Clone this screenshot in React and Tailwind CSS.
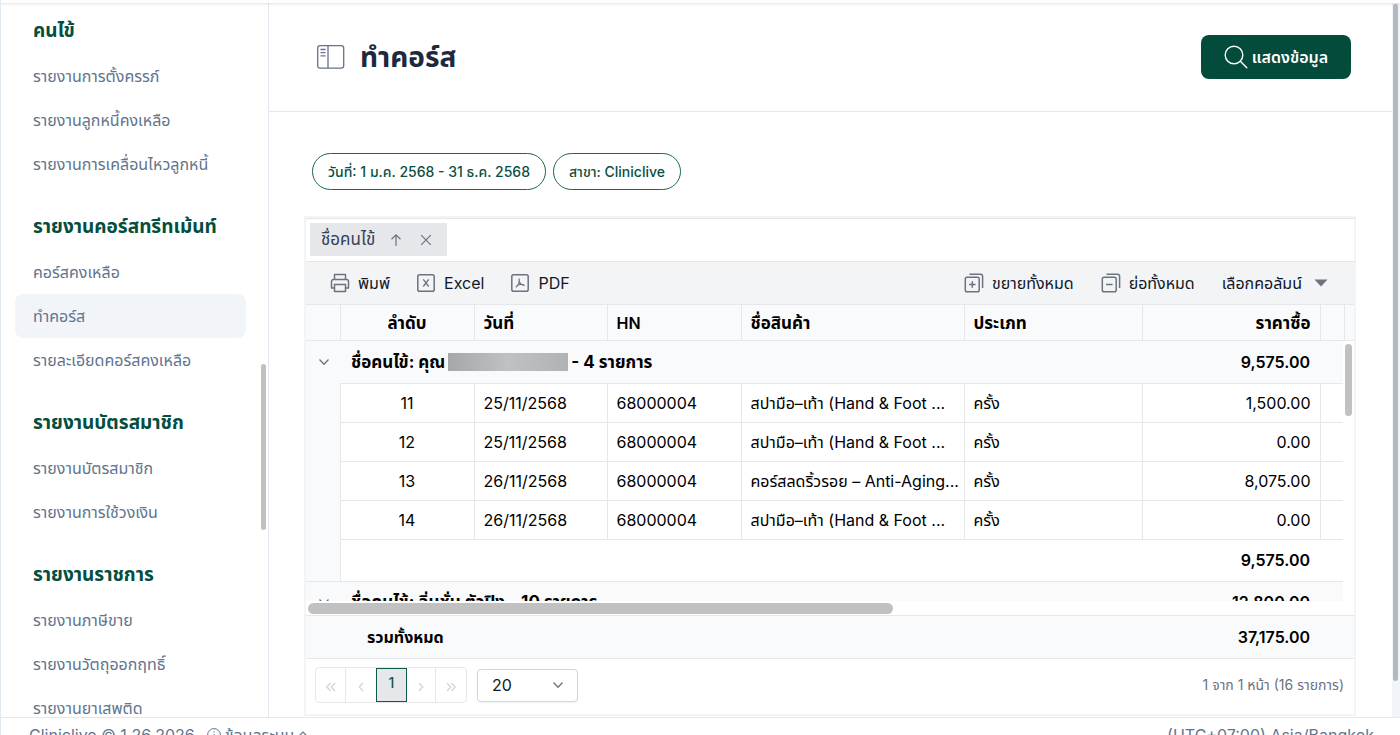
import React, { useState } from 'react';

const menuSections = [
  {
    title: 'คนไข้',
    items: ['รายงานการตั้งครรภ์', 'รายงานลูกหนี้คงเหลือ', 'รายงานการเคลื่อนไหวลูกหนี้']
  },
  {
    title: 'รายงานคอร์สทรีทเม้นท์',
    items: ['คอร์สคงเหลือ', 'ทำคอร์ส', 'รายละเอียดคอร์สคงเหลือ']
  },
  {
    title: 'รายงานบัตรสมาชิก',
    items: ['รายงานบัตรสมาชิก', 'รายงานการใช้วงเงิน']
  },
  {
    title: 'รายงานราชการ',
    items: ['รายงานภาษีขาย', 'รายงานวัตถุออกฤทธิ์', 'รายงานยาเสพติด']
  }
];

const rows = [
  { no: 11, date: '25/11/2568', hn: '68000004', name: 'สปามือ–เท้า (Hand & Foot ...', type: 'ครั้ง', price: '1,500.00' },
  { no: 12, date: '25/11/2568', hn: '68000004', name: 'สปามือ–เท้า (Hand & Foot ...', type: 'ครั้ง', price: '0.00' },
  { no: 13, date: '26/11/2568', hn: '68000004', name: 'คอร์สลดริ้วรอย – Anti-Aging...', type: 'ครั้ง', price: '8,075.00' },
  { no: 14, date: '26/11/2568', hn: '68000004', name: 'สปามือ–เท้า (Hand & Foot ...', type: 'ครั้ง', price: '0.00' }
];

const PanelIcon = () => (
  <svg width="28" height="24" viewBox="0 0 28 24" fill="none" stroke="#64748b" strokeWidth="1.3">
    <rect x="0.7" y="0.7" width="26" height="22.4" rx="2.4" />
    <path d="M11 0.7V23.1M3.5 4.5H8.5M3.5 7.7H8.5M3.5 10.9H8.5" />
  </svg>
);

const SearchIcon = () => (
  <svg width="24" height="24" viewBox="0 0 24 24" fill="none" stroke="white" strokeWidth="1.4" strokeLinecap="round">
    <circle cx="10" cy="10" r="8.8" />
    <path d="M16.3 16.3L22.8 22.8" />
  </svg>
);

const PrintIcon = () => (
  <svg width="20" height="20" viewBox="0 0 20 20" fill="none" stroke="#6b7280" strokeWidth="1.5" strokeLinejoin="round">
    <path d="M4.5 6.5V1.5H15.5V6.5" />
    <path d="M4.5 15H1.5V8.5C1.5 7.4 2.4 6.5 3.5 6.5H16.5C17.6 6.5 18.5 7.4 18.5 8.5V15H15.5" />
    <rect x="4.5" y="11.5" width="11" height="7" />
  </svg>
);

const ExcelIcon = () => (
  <svg width="18" height="18" viewBox="0 0 18 18" fill="none" stroke="#6b7280" strokeWidth="1.5">
    <rect x="0.8" y="0.8" width="16.4" height="16.4" rx="1.8" />
    <path d="M6.3 5.3L11.7 12.5M11.7 5.3L6.3 12.5" strokeWidth="1.3" />
  </svg>
);

const PdfIcon = () => (
  <svg width="18" height="18" viewBox="0 0 18 18" fill="none" stroke="#6b7280" strokeWidth="1.5">
    <rect x="0.8" y="0.8" width="16.4" height="16.4" rx="1.8" />
    <path d="M8 4.5C8.8 8 7 11.5 4.8 13.2M8.3 7.5C9 9.5 11 11.2 13.6 11.4M5.8 11.6C7.5 10.5 10 10 12.6 10.6" strokeWidth="1.2" />
  </svg>
);

const StackIcon = ({ plus }) => (
  <svg width="20" height="20" viewBox="0 0 20 20" fill="none" stroke="#6b7280" strokeWidth="1.5">
    <rect x="1.3" y="4.3" width="13.9" height="14.4" rx="1.8" />
    <path d="M5.5 1.3H16.5C17.8 1.3 18.6 2.1 18.6 3.4V15" />
    <path d="M5 11.5H11.6" />
    {plus && <path d="M8.3 8.2V14.8" />}
  </svg>
);

const ArrowUpIcon = () => (
  <svg width="12" height="12" viewBox="0 0 12 12" fill="none" stroke="#6b7280" strokeWidth="1.2">
    <path d="M6 12V1M1.5 5.3L6 0.9L10.5 5.3" />
  </svg>
);

const CloseIcon = () => (
  <svg width="12" height="12" viewBox="0 0 12 12" fill="none" stroke="#6b7280" strokeWidth="1.2">
    <path d="M1.2 1.2L10.8 10.8M10.8 1.2L1.2 10.8" />
  </svg>
);

const ChevronDownIcon = () => (
  <svg width="12" height="12" viewBox="0 0 12 12" fill="none" stroke="#6b7280" strokeWidth="1.3">
    <path d="M1.5 3.5L6 8.2L10.5 3.5" />
  </svg>
);

const PagerIcon = ({ d }) => (
  <svg width="12" height="12" viewBox="0 0 12 12" fill="none" stroke="#d1d5db" strokeWidth="1.3">
    <path d={d} />
  </svg>
);

const Columns = () => (
  <colgroup>
    <col className="w-[34px]" />
    <col className="w-[134px]" />
    <col className="w-[133px]" />
    <col className="w-[134px]" />
    <col className="w-[223px]" />
    <col className="w-[178px]" />
    <col className="w-[178px]" />
    <col />
  </colgroup>
);

const Sidebar = () => (
  <aside className="relative w-[268px] shrink-0 overflow-hidden border-r border-slate-200">
    <nav className="pt-[5px] pr-[22px] pl-[14px]">
      {menuSections.map((section) => (
        <div key={section.title} className="mb-[18px]">
          <h2 className="flex h-[46px] items-center px-[18px] text-[19px] font-bold whitespace-nowrap text-[#044e3f]">{section.title}</h2>
          {section.items.map((item) => (
            <a
              key={item}
              href="#"
              className={`flex h-11 items-center rounded-lg px-[18px] text-base whitespace-nowrap text-slate-500 ${item === 'ทำคอร์ส' ? 'bg-slate-100' : ''}`}
            >
              {item}
            </a>
          ))}
        </div>
      ))}
    </nav>
    <div className="absolute top-[361px] right-[2px] h-[166px] w-[5px] rounded-full bg-[#c1c1c1]" />
  </aside>
);

const Toolbar = () => (
  <div className="flex h-[43px] items-center justify-between border-t border-gray-200 bg-gray-100 pr-[26px] pl-6 text-gray-900">
    <div className="flex items-center gap-[27px]">
      <button className="flex items-center gap-2">
        <PrintIcon />
        พิมพ์
      </button>
      <button className="flex items-center gap-[9px]">
        <ExcelIcon />
        Excel
      </button>
      <button className="flex items-center gap-[9px]">
        <PdfIcon />
        PDF
      </button>
    </div>
    <div className="flex items-center gap-[27px]">
      <button className="flex items-center gap-2">
        <StackIcon plus />
        ขยายทั้งหมด
      </button>
      <button className="flex items-center gap-2">
        <StackIcon />
        ย่อทั้งหมด
      </button>
      <button className="flex items-center gap-3">
        เลือกคอลัมน์
        <svg width="14" height="8" viewBox="0 0 14 8" fill="#6b7280">
          <path d="M0.5 0.5H13.5L7 7.5Z" />
        </svg>
      </button>
    </div>
  </div>
);

const CourseGrid = () => {
  const [pageSize, setPageSize] = useState('20');

  return (
    <div className="mt-[26px] mr-9 ml-[35px] border-2 border-gray-100 text-base text-black">
      {/* Group drop area */}
      <div className="border-t border-gray-200 px-1 pt-1 pb-[5px]">
        <div className="flex h-[33px] w-[137px] items-center justify-between bg-gray-200 pr-[15px] pl-[11px] text-[17px] text-gray-700">
          ชื่อคนไข้
          <span className="flex gap-[18px]">
            <ArrowUpIcon />
            <button aria-label="remove group">
              <CloseIcon />
            </button>
          </span>
        </div>
      </div>

      <Toolbar />

      {/* Header */}
      <div className="flex border-y border-gray-200 bg-[#f9fafb]">
        <table className="w-full table-fixed">
          <Columns />
          <thead>
            <tr className="h-[35px] text-[17px] leading-6">
              <th className="border-r border-gray-200" />
              <th className="border-r border-gray-200 text-center">ลำดับ</th>
              <th className="border-r border-gray-200 px-[9px] text-left">วันที่</th>
              <th className="border-r border-gray-200 px-[9px] text-left text-base font-semibold">HN</th>
              <th className="border-r border-gray-200 px-[9px] text-left">ชื่อสินค้า</th>
              <th className="border-r border-gray-200 px-[9px] text-left">ประเภท</th>
              <th className="border-r border-gray-200 px-[9px] text-right">ราคาซื้อ</th>
              <th className="border-r border-gray-200" />
            </tr>
          </thead>
        </table>
        <div className="w-[9px] shrink-0" />
      </div>

      {/* Rows */}
      <div className="flex h-[260px] overflow-hidden">
        <table className="w-full table-fixed">
          <Columns />
          <tbody>
            <tr className="h-[42px] bg-[#f9fafb] font-bold">
              <td>
                <button aria-label="collapse" className="ml-3 flex">
                  <ChevronDownIcon />
                </button>
              </td>
              <td colSpan={5} className="pl-[11px]">
                <span className="flex items-center gap-[3px] text-[17px] leading-6">
                  ชื่อคนไข้: คุณ
                  <span className="h-[18px] w-[120px] bg-linear-to-r from-[#a6a7a9] via-[#c0c1c2] to-[#b0b2b4]" />
                  - 4 รายการ
                </span>
              </td>
              <td className="pr-[10px] text-right font-semibold">9,575.00</td>
              <td />
            </tr>
            {rows.map((row) => (
              <tr key={row.no} className="h-[39px]">
                <td className="border-r border-gray-200 bg-[#f9fafb]" />
                <td className="border-y border-r border-gray-200 text-center">{row.no}</td>
                <td className="border-y border-r border-gray-200 px-[9px]">{row.date}</td>
                <td className="border-y border-r border-gray-200 px-[9px]">{row.hn}</td>
                <td className="truncate border-y border-r border-gray-200 pr-1 pl-[9px]">{row.name}</td>
                <td className="border-y border-r border-gray-200 px-[9px]">{row.type}</td>
                <td className="border-y border-r border-gray-200 px-[9px] text-right">{row.price}</td>
                <td className="border-y border-gray-200" />
              </tr>
            ))}
            <tr className="h-[42px] font-semibold">
              <td className="border-r border-gray-200 bg-[#f9fafb]" />
              <td colSpan={5} />
              <td className="pr-[10px] text-right">9,575.00</td>
              <td />
            </tr>
            <tr className="h-[42px] border-t border-gray-200 bg-[#f9fafb] font-bold">
              <td>
                <button aria-label="collapse" className="ml-3 flex">
                  <ChevronDownIcon />
                </button>
              </td>
              <td colSpan={5} className="pl-[11px] text-[17px] leading-6">ชื่อคนไข้: ลิ่นชั่น ตัวปิง - 10 รายการ</td>
              <td className="pr-[10px] text-right font-semibold">12,800.00</td>
              <td />
            </tr>
          </tbody>
        </table>
        <div className="w-[11px] shrink-0 pt-[3px] pl-[2px]">
          <div className="h-[72px] w-[7px] rounded-full bg-[#c1c1c1]" />
        </div>
      </div>
      <div className="h-[14px] px-[2px] pt-[2px]">
        <div className="h-[11px] w-[56%] rounded-full bg-[#c1c1c1]" />
      </div>

      {/* Grand total */}
      <div className="border-y border-gray-200 bg-[#f9fafb] pr-[11px]">
        <table className="w-full table-fixed">
          <Columns />
          <tbody>
            <tr className="h-[42px] font-bold">
              <td />
              <td colSpan={5} className="pl-[27px]">รวมทั้งหมด</td>
              <td className="pr-[10px] text-right font-semibold">37,175.00</td>
              <td />
            </tr>
          </tbody>
        </table>
      </div>

      {/* Pager */}
      <div className="flex h-[55px] items-center pr-[10px] pb-[3px] pl-[9px]">
        <div className="flex h-9 rounded border border-gray-200">
          <button aria-label="first page" className="flex w-[30px] items-center justify-center border-r border-gray-200 pt-1">
            <PagerIcon d="M5.5 2L1.8 6L5.5 10M10 2L6.3 6L10 10" />
          </button>
          <button aria-label="previous page" className="flex w-[30px] items-center justify-center pt-1">
            <PagerIcon d="M8 2L4.3 6L8 10" />
          </button>
          <button className="h-[34px] w-[31px] border border-[#0b5a4a] bg-gray-200 pb-1 text-sm font-medium text-[#0b5a4a]">1</button>
          <button aria-label="next page" className="flex w-[29px] items-center justify-center border-r border-gray-200 pt-1">
            <PagerIcon d="M4 2L7.7 6L4 10" />
          </button>
          <button aria-label="last page" className="flex w-[30px] items-center justify-center pt-1">
            <PagerIcon d="M2 2L5.7 6L2 10M6.5 2L10.2 6L6.5 10" />
          </button>
        </div>
        <div className="relative ml-[10px]">
          <select
            aria-label="page size"
            value={pageSize}
            onChange={(e) => setPageSize(e.target.value)}
            className="h-[33px] w-[101px] appearance-none rounded border border-gray-300 bg-white pl-[14px] text-gray-900 shadow-xs"
          >
            <option value="20">20</option>
            <option value="50">50</option>
            <option value="100">100</option>
          </select>
          <span className="pointer-events-none absolute top-[10px] right-[14px]">
            <ChevronDownIcon />
          </span>
        </div>
        <p className="ml-auto text-sm text-gray-500">1 จาก 1 หน้า (16 รายการ)</p>
      </div>
    </div>
  );
};

const App = () => {
  return (
    <div className="flex h-screen flex-col overflow-hidden border-l border-slate-200 bg-white font-['Inter','Noto_Sans_Thai','Noto_Sans',sans-serif]">
      <header className="z-10 h-[3px] shrink-0 bg-white shadow" />
      <div className="flex min-h-0 flex-1">
        <Sidebar />
        <main className="min-w-0 flex-1 overflow-hidden">
          <div className="flex h-[109px] items-center justify-between border-b border-slate-200 pr-[41px] pl-12">
            <div className="flex items-center gap-[15px]">
              <button aria-label="toggle menu">
                <PanelIcon />
              </button>
              <h1 className="text-[28px] leading-8 font-bold text-slate-800">ทำคอร์ส</h1>
            </div>
            <button className="flex h-11 w-[150px] items-center justify-center gap-1 rounded-lg bg-[#034c3c] text-base font-semibold text-white">
              <SearchIcon />
              แสดงข้อมูล
            </button>
          </div>

          <div className="mt-[41px] ml-[43px] flex gap-[7px] text-sm font-medium text-[#0b4f41]">
            <span className="flex h-[37px] items-center rounded-full border border-[#1b6656] px-[15px]">วันที่: 1 ม.ค. 2568 - 31 ธ.ค. 2568</span>
            <span className="flex h-[37px] items-center rounded-full border border-[#1b6656] px-[15px]">สาขา: Cliniclive</span>
          </div>

          <CourseGrid />
        </main>
        <div className="w-2 shrink-0 bg-slate-100 pt-px pl-px">
          <div className="h-[95%] w-[5px] rounded-full bg-[#b4b9bc]" />
        </div>
      </div>
      <footer className="flex h-[18px] shrink-0 items-start justify-between overflow-hidden border-t border-slate-200 pt-[5px] pr-[26px] pl-7 text-base text-slate-500">
        <div className="flex items-center">
          <span>Cliniclive © 1.26.2026</span>
          <button className="ml-3 flex items-center gap-1">
            <svg width="14" height="14" viewBox="0 0 14 14" fill="none" stroke="currentColor">
              <circle cx="7" cy="7" r="6.4" />
              <path d="M7 6V10.5M7 3.3V4.6" />
            </svg>
            ข้อมูลระบบ
            <svg width="10" height="10" viewBox="0 0 10 10" fill="none" stroke="currentColor" strokeWidth="1.2">
              <path d="M1.5 5.5L5 2L8.5 5.5" />
            </svg>
          </button>
        </div>
        <span>(UTC+07:00) Asia/Bangkok</span>
      </footer>
    </div>
  );
};

export default App;
